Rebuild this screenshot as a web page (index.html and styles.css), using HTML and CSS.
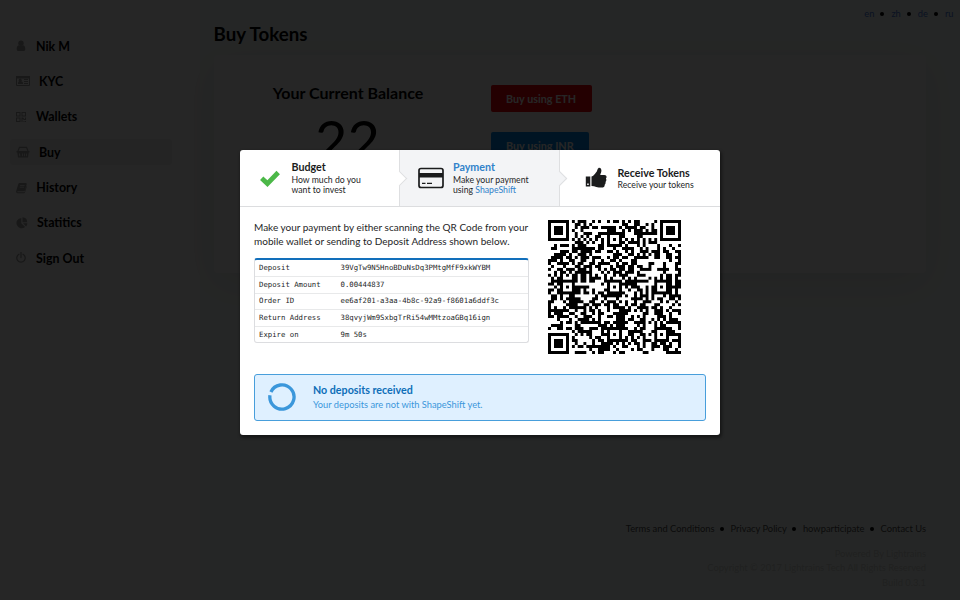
FILE: index.html
```html
<!DOCTYPE html>
<html lang="en">
<head>
<meta charset="utf-8">
<title>Buy Tokens</title>
<link rel="stylesheet" href="styles.css">
</head>
<body>
<div class="page">
  <aside class="sidebar">
    <a class="item"><svg width="10" height="12" viewBox="0 0 10 12"><circle cx="5" cy="3.3" r="2.7"/><path d="M.7 9c0-2.500 1-3.700 2.300-3.700a3.500 3.500 0 0 0 4 0C8.300 5.300 9.300 6.500 9.300 9c0 1.400-.8 2-1.700 2H2.400C1.500 11 .7 10.400.7 9z"/></svg><span>Nik M</span></a>
    <a class="item wide"><svg width="14" height="12" viewBox="0 0 14 12"><path fill-rule="evenodd" d="M1 1h12q1 0 1 1v8q0 1-1 1H1q-1 0-1-1V2q0-1 1-1zM1 3v7h12V3zM2 9c0-2 .5-2.500 1.200-2.500a1.600 1.600 0 1 1 2 0C6.500 6.500 7 7 7 9zM8 4h4v1H8zM8 6h4v1H8zM8 8h4v1H8z"/><path d="M0 1h14v2.500H0z"/></svg><span>KYC</span></a>
    <a class="item"><svg width="10" height="12" viewBox="0 0 10 12"><path fill-rule="evenodd" d="M0 1h4.500v4.500H0zM1 2v2.500h2.500V2zM5.500 1H10v4.500H5.500zM6.500 2v2.500H9V2zM0 6.500h4.500V11H0zM1 7.500V10h2.500V7.500zM5.500 6.500H7l1.500 1.500H9V6.500h1V9H8L6.500 8v3h-1zM7.500 10h1v1h-1zM9 10h1v1H9z"/></svg><span>Wallets</span></a>
    <a class="item wide active"><svg width="14" height="12" viewBox="0 0 14 12"><path d="M2 5l1.500-3.700H10.500L12 5" fill="none" stroke="currentColor" stroke-width="1.200"/><path fill-rule="evenodd" d="M.5 5h13v1.500h-.8L12 11.500H2L1.300 6.500H.5zM3 7.500l.3 2.700h1L4 7.500zM6 7.500v2.700h.8V7.500zM8 7.500v2.700h.8V7.500zM10.300 7.500L10 10.200h.8l.3-2.700z"/></svg><span>Buy</span></a>
    <a class="item"><svg width="11" height="12" viewBox="0 0 11 12"><path fill-rule="evenodd" d="M3.500 1h6q1.500 0 1.200 1.200L9 8.300q-.3.900-1.200.9H2q-.8 0-.8.600t.8.500h6.500L10.500 4l.4.300L9 10.600q-.2.600-1 .6H1.500Q-.2 11 .2 9L2.300 2q.3-1 1.200-1zM4.300 3l-.2.700h4.400l.2-.7zM3.800 4.700l-.2.700H8l.2-.7z"/></svg><span>History</span></a>
    <a class="item"><svg width="12" height="12" viewBox="0 0 12 12"><path d="M5.300.9v5.300l3.800 3.800A5.200 5.200 0 1 1 5.300.9z"/><path d="M6.500.3a5 5 0 0 1 4.700 4.900H6.500zM7 6.300h4.400a5 5 0 0 1-1.300 3.100z"/></svg><span>Statitics</span></a>
    <a class="item"><svg width="10" height="12" viewBox="0 0 10 12"><path d="M3 2.300a4.200 4.200 0 1 0 4 0M5 .5v5" fill="none" stroke="currentColor" stroke-width="1.300" stroke-linecap="round"/></svg><span>Sign Out</span></a>
  </aside>
  <main class="main">
    <nav class="langs"><a>en</a><i></i><a>zh</a><i></i><a>de</a><i></i><a>ru</a></nav>
    <h1>Buy Tokens</h1>
    <section class="card">
      <div class="balance"><h2>Your Current Balance</h2><div class="number">22</div></div>
      <div class="actions"><a class="btn red">Buy using ETH</a><a class="btn blue">Buy using INR</a></div>
    </section>
    <footer>
      <div class="links"><a>Terms and Conditions</a><i></i><a>Privacy Policy</a><i></i><a>howparticipate</a><i></i><a>Contact Us</a></div>
      <div class="legal">Powered By Lightrains<br>Copyright © 2017 Lightrains Tech All Rights Reserved<br>Build 0.3.1</div>
    </footer>
  </main>
</div>
<div class="dimmer">
  <div class="modal">
    <div class="steps">
      <div class="step first">
        <svg width="22" height="20" viewBox="0 0 22 20"><path d="M2.700 10.300L8.400 15.600L19.200 4.500" fill="none" stroke="#4cb848" stroke-width="4.800"/></svg>
        <div><div class="title">Budget</div><div class="desc">How much do you<br>want to invest</div></div>
      </div>
      <div class="step second active">
        <svg width="26" height="22" viewBox="0 0 26 22"><rect x="1" y="1.500" width="24" height="19" rx="2" fill="none" stroke="#1b1c1d" stroke-width="1.700"/><path d="M1 6h24v4.500H1zM4 15.700h3.500V17H4zM9 15.700h5V17H9z" fill="#1b1c1d"/></svg>
        <div><div class="title">Payment</div><div class="desc">Make your payment<br>using <a>ShapeShift</a></div></div>
      </div>
      <div class="step third">
        <svg width="22" height="22" viewBox="0 0 22 22"><path fill="#1b1c1d" fill-rule="evenodd" d="M.8 9.500h4.500v10H.8zM2.200 16.500v1.500h1.500v-1.500zM6.500 9.500c2-.3 3.200-2.500 4.500-4 1.400-1.300 1.300-4.200 2.600-4.600 2.200-.3 3.100 1.500 2.700 3.700-.2 1.400-.9 2.300-1 3.400h4c2.300 0 2.900 2.300 1.600 3.600.8 1.200.5 2.500-.4 3.300.4 1.200 0 2.200-.8 2.900.1 2-1.200 2.800-3 2.800-4.500 0-6.500-1.300-10.200-1.600z"/></svg>
        <div><div class="title">Receive Tokens</div><div class="desc">Receive your tokens</div></div>
      </div>
    </div>
    <div class="content">
      <div class="info">
        <div class="details">
          <p>Make your payment by either scanning the QR Code from your<br>mobile wallet or sending to Deposit Address shown below.</p>
          <div class="table">
            <div class="row"><span>Deposit</span><span>39VgTw9N5HnoBDuNsDq3PMtgMfF9xkWYBM</span></div>
            <div class="row"><span>Deposit Amount</span><span>0.00444837</span></div>
            <div class="row"><span>Order ID</span><span>ee6af201-a3aa-4b8c-92a9-f8601a6ddf3c</span></div>
            <div class="row"><span>Return Address</span><span>38qvyjWm9SxbgTrRi54wMMtzoaGBq16ign</span></div>
            <div class="row"><span>Expire on</span><span>9m 50s</span></div>
          </div>
        </div>
        <canvas id="qr" class="qr" width="360" height="360"></canvas>
      </div>
      <div class="message">
        <svg width="28" height="28" viewBox="0 0 28 28"><path d="M2.900 9A12.100 12.100 0 1 1 1.950 12.300" fill="none" stroke="#3b97db" stroke-width="3.300"/></svg>
        <div><div class="msg-title">No deposits received</div><div class="msg-text">Your deposits are not with ShapeShift yet.</div></div>
      </div>
    </div>
  </div>
</div>
<script src="qr.js"></script>
</body>
</html>
```
FILE: styles.css
```css
* { box-sizing: border-box; }
body { margin: 0; width: 960px; height: 600px; overflow: hidden; background: #f8fffc; font-family: Lato, sans-serif; color: #000; }
h1, h2, p { margin: 0; }
.page { display: flex; height: 600px; }
.sidebar { width: 200px; height: 600px; padding: 33px 28px 0 10px; background: #fdfdfd; display: flex; flex-direction: column; gap: 9.400px; }
.item { display: flex; align-items: center; height: 26px; padding-left: 6px; font-size: 12.400px; font-weight: 700; border-radius: 3px; }
.item svg { color: #a0a0a0; fill: #a0a0a0; margin-right: 10px; flex: none; }
.item.wide svg { margin-right: 9px; }
.item:nth-child(6) svg { margin-right: 9px; }
.item:nth-child(5) svg { margin-right: 9.300px; }
.item.active { background: #f0f0f0; }
.main { flex: 1; display: flex; flex-direction: column; padding: 8px 34px 0 14px; }
.langs { display: flex; align-items: center; justify-content: flex-end; height: 11px; margin-right: -27.500px; font-size: 9.300px; color: #4878e0; }
.langs i, .links i { width: 4px; height: 4px; border-radius: 50%; background: #000; margin: 0 7px 0 6px; }
h1 { font-size: 18.700px; line-height: 24px; margin: 3px 0 0 -.5px; font-weight: 700; }
.card { display: flex; height: 218px; margin-top: 9px; border-radius: 4px; background: #fff; box-shadow: 0 10px 40px 0 rgba(60, 30, 30, .1); }
.balance { width: 268px; padding-top: 27px; text-align: center; }
h2 { font-size: 16px; line-height: 22px; font-weight: 700; }
.number { font-size: 56px; line-height: 60px; margin-top: 6px; margin-left: -1px; }
.actions { padding: 30px 0 0 8.500px; display: flex; flex-direction: column; align-items: flex-start; gap: 20px; }
.btn { height: 27px; line-height: 28px; padding: 0 15.500px; border-radius: 2px; font-size: 10.800px; font-weight: 700; color: #fff; }
.btn.red { background: #f00008; }
.btn.blue { background: #0088e8; }
footer { margin-top: auto; padding-bottom: 10px; text-align: right; font-size: 9.350px; }
.links { display: flex; justify-content: flex-end; align-items: center; color: #505050; margin-bottom: 12px; height: 12px; }
.links i { margin: 0 6.500px 0 5.500px; }
.legal { color: #d4d8d6; line-height: 14.500px; }
.dimmer { position: absolute; inset: 0; background: rgba(0, 0, 0, .85); display: flex; align-items: flex-start; justify-content: center; padding-top: 150px; }
.modal { width: 480px; height: 284.500px; background: #fff; border-radius: 3px; overflow: hidden; box-shadow: 1px 2px 3px 1px rgba(0, 0, 0, .4); color: #252627; }
.steps { display: flex; height: 57px; border-bottom: 1px solid #dcdddf; }
.step { position: relative; width: 160px; display: flex; align-items: center; border-right: 1px solid #dedfe1; }
.step.third { border-right: 0; }
.step::after { content: ""; position: absolute; z-index: 1; right: -5.500px; top: 23px; width: 10px; height: 10px; background: #fff; border: solid #dedfe1; border-width: 0 1px 1px 0; transform: rotate(-45deg); }
.step.third::after { display: none; }
.step.active, .step.active::after { background: #f3f4f6; }
.step svg { flex: none; }
.first { padding-left: 19px; }
.first svg { margin-right: 10.500px; }
.second { padding-left: 18px; }
.second svg { margin-right: 9px; }
.third { padding-left: 25px; }
.third svg { margin-right: 10.500px; }
.title { font-size: 10.700px; line-height: 13px; margin-bottom: 1.500px; font-weight: 700; color: #1b1c1d; }
.active .title, .desc a { color: #3182ca; }
.desc { font-size: 8.700px; line-height: 10.500px; }
.content { padding: 13px 14px 14px; }
.info { display: flex; }
.details { width: 275px; }
p { font-size: 10px; line-height: 14.200px; white-space: nowrap; }
.table { margin-top: 10px; height: 85px; border: 1px solid #dcdde0; border-top: 2px solid #126fbb; border-radius: 3px; }
.row { display: flex; align-items: center; height: 16.700px; padding: 0 0 1.500px 4px; border-bottom: 1px solid #e8e9ea; font: 7.320px "DejaVu Sans Mono", monospace; white-space: pre; }
.row:last-child { border: 0; }
.row span:first-child { width: 81.500px; }
.qr { display: block; width: 133.700px; height: 133.700px; margin: .3px 0 0 18.500px; }
.message { display: flex; align-items: center; width: 452px; height: 47px; margin-top: 20px; padding-left: 13px; background: #dff0ff; border: 1px solid #489edb; border-radius: 3px; }
.message svg { margin-right: 17px; }
.msg-title { font-size: 10.700px; line-height: 15px; font-weight: 700; color: #0e6eb8; }
.msg-text { font-size: 9.300px; line-height: 15px; color: #3b97db; }
```
FILE: qr.js
```js
// QR code, version 7, error correction level H, byte mode, mask 0.
(function () {
  var N = 45, text = "bitcoin:39VgTw9N5HnoBDuNsDq3PMtgMfF9xkWYBM?amount=0.00444837";
  var exp = [], log = [], x = 1, i, j;
  for (i = 0; i < 255; i++) { exp[i] = x; log[x] = i; x <<= 1; if (x & 256) x ^= 0x11d; }
  function mul(a, b) { return a && b ? exp[(log[a] + log[b]) % 255] : 0; }

  var bits = [];
  function put(v, n) { for (var k = n - 1; k >= 0; k--) bits.push(v >> k & 1); }
  put(4, 4); put(text.length, 8);
  for (i = 0; i < text.length; i++) put(text.charCodeAt(i), 8);
  put(0, 4);
  var data = [];
  for (i = 0; i < bits.length; i += 8) data.push(parseInt(bits.slice(i, i + 8).join(""), 2));
  for (var pad = 236; data.length < 66; pad ^= 236 ^ 17) data.push(pad);

  var gen = [1];
  for (i = 0; i < 26; i++) {
    var next = gen.concat(0);
    for (j = 0; j < gen.length; j++) next[j + 1] ^= mul(gen[j], exp[i]);
    gen = next;
  }
  var blocks = [], ecs = [], pos = 0;
  [13, 13, 13, 13, 14].forEach(function (len) {
    var d = data.slice(pos, pos + len); pos += len;
    var r = d.concat(new Array(26).fill(0));
    for (var a = 0; a < len; a++) {
      var f = r[a];
      for (var b = 0; b < gen.length; b++) r[a + b] ^= mul(gen[b], f);
    }
    blocks.push(d); ecs.push(r.slice(len));
  });
  var out = [];
  for (i = 0; i < 14; i++) blocks.forEach(function (b) { if (i < b.length) out.push(b[i]); });
  for (i = 0; i < 26; i++) ecs.forEach(function (b) { out.push(b[i]); });

  function bch(v, poly, deg) {
    var r = v << deg;
    for (var k = 20; k >= deg; k--) if (r >> k & 1) r ^= poly << (k - deg);
    return v << deg | r;
  }
  var m = [], r, c, k;
  for (r = 0; r < N; r++) m.push(new Array(N).fill(null));
  function finder(y, x) {
    for (var a = -1; a < 8; a++) for (var b = -1; b < 8; b++) {
      if (y + a < 0 || x + b < 0 || y + a >= N || x + b >= N) continue;
      var d = Math.max(Math.abs(a - 3), Math.abs(b - 3));
      m[y + a][x + b] = d !== 2 && d !== 4 ? 1 : 0;
    }
  }
  finder(0, 0); finder(0, N - 7); finder(N - 7, 0);
  for (k = 8; k < N - 8; k++) m[6][k] = m[k][6] = k % 2 ? 0 : 1;
  [6, 22, 38].forEach(function (y) {
    [6, 22, 38].forEach(function (x) {
      if (y === 6 && x !== 22 || x === 6 && y !== 22) return;
      for (var a = -2; a < 3; a++) for (var b = -2; b < 3; b++)
        m[y + a][x + b] = Math.max(Math.abs(a), Math.abs(b)) === 1 ? 0 : 1;
    });
  });
  var ver = bch(7, 0x1f25, 12);
  for (k = 0; k < 18; k++) {
    var u = Math.floor(k / 3), v = N - 11 + k % 3;
    m[u][v] = m[v][u] = ver >> k & 1;
  }
  var fmt = bch(2 << 3, 0x537, 10) ^ 0x5412;
  for (k = 0; k < 15; k++) {
    var bit = fmt >> k & 1;
    m[k < 6 ? k : k < 8 ? k + 1 : N - 15 + k][8] = bit;
    m[8][k < 8 ? N - 1 - k : k === 8 ? 7 : 14 - k] = bit;
  }
  m[N - 8][8] = 1;
  var n = 0, up = true;
  for (c = N - 1; c > 0; c -= 2) {
    if (c === 6) c--;
    for (k = 0; k < N; k++) {
      r = up ? N - 1 - k : k;
      for (var s = 0; s < 2; s++) {
        if (m[r][c - s] !== null) continue;
        var val = n < out.length * 8 ? out[n >> 3] >> (7 - (n & 7)) & 1 : 0;
        n++;
        m[r][c - s] = (r + c - s) % 2 === 0 ? val ^ 1 : val;
      }
    }
    up = !up;
  }

  var ctx = document.getElementById("qr").getContext("2d");
  ctx.fillStyle = "#fff"; ctx.fillRect(0, 0, 360, 360);
  ctx.fillStyle = "#000";
  for (i = 0; i < N; i++) for (j = 0; j < N; j++) if (m[i][j]) ctx.fillRect(j * 8, i * 8, 8, 8);
})();
```
